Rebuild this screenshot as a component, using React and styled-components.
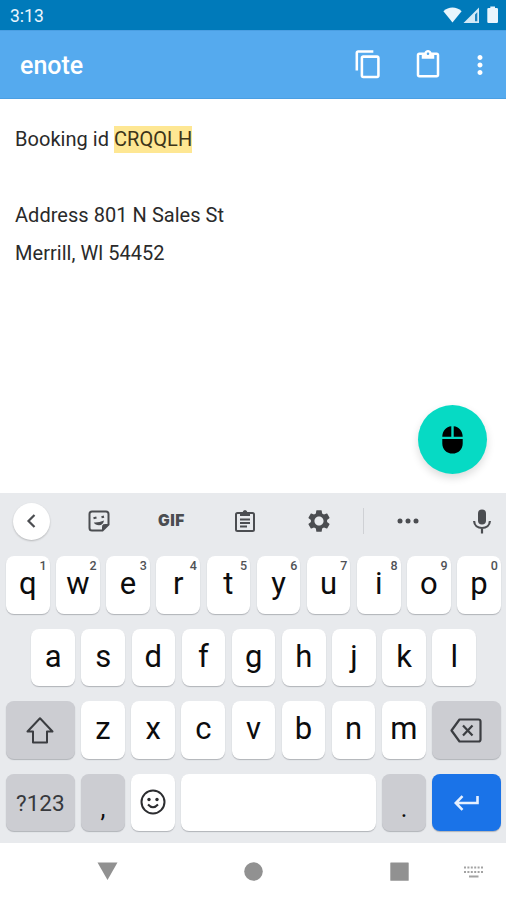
import React from 'react';
import styled, {createGlobalStyle} from 'styled-components';

const GlobalStyle = createGlobalStyle`
  * {
    box-sizing: border-box;
  }

  body {
    margin: 0;
    background-color: #fff;
    font-family: Roboto, 'Liberation Sans', sans-serif;
  }

  svg {
    display: block;
    flex-shrink: 0;
  }
`;

const Screen = styled.div`
  display: flex;
  flex-direction: column;
  width: 506px;
  height: 900px;
  overflow: hidden;
`;

const StatusBar = styled.div`
  display: flex;
  align-items: center;
  height: 30px;
  padding: 0 7px 0 10px;
  background-color: #007aba;
  color: #e9f5fd;
`;

const Clock = styled.span`
  flex: 1;
  padding-top: 2px;
  font-size: 17.5px;
  line-height: 28px;
`;

const AppBar = styled.header`
  display: flex;
  align-items: center;
  height: 69px;
  padding: 0 11px 0 20px;
  background-color: #55aaee;
  border-top: 1px solid #4b9fe2;
  border-bottom: 1px solid #4a9fe3;
  color: #fff;
`;

const Title = styled.h1`
  flex: 1;
  margin: 2px 0 0;
  font-size: 25px;
  font-weight: 500;
  letter-spacing: 0;
`;

const BarButton = styled.button`
  display: flex;
  margin: 0 0 0 ${(props) => props.$gap}px;
  padding: 0;
  border: 0;
  background: none;
  color: inherit;
`;

const Note = styled.main`
  position: relative;
  height: 394px;
  padding: 21px 15px 0;
  background-color: #fff;
`;

const Line = styled.p`
  height: 38px;
  margin: 0;
  color: #2a2a2a;
  font-size: 20px;
  line-height: 38px;
  letter-spacing: 0.04px;
  white-space: nowrap;
`;

const Mark = styled.mark`
  padding: 1px 0 2px;
  background-color: #fee793;
  color: #3c3419;
`;

const Fab = styled.button`
  position: absolute;
  right: 19px;
  bottom: 19px;
  display: flex;
  align-items: center;
  justify-content: center;
  width: 69px;
  height: 69px;
  padding: 0;
  border: 0;
  border-radius: 50%;
  background-color: #06dac4;
  color: #000;
  box-shadow: 0 4px 9px rgba(0, 0, 0, 0.14);
`;

const Keyboard = styled.section`
  height: 350px;
  background-color: #e8eaed;
`;

const Tools = styled.div`
  display: grid;
  grid-template-columns: 62px 73px 73px 74px 73px 16px 74px 1fr;
  align-items: center;
  justify-items: center;
  height: 63px;
  padding-bottom: 7px;
  color: #4b4d51;
`;

const Back = styled.div`
  display: flex;
  align-items: center;
  justify-content: center;
  width: 37px;
  height: 37px;
  border-radius: 50%;
  background-color: #fff;
  box-shadow: 0 1px 2px rgba(0, 0, 0, 0.22);
`;

const Tool = styled.div`
  display: flex;
`;

const MicTool = styled(Tool)`
  justify-self: end;
  margin-right: 15px;
`;

const Gif = styled.span`
  font-family: Inter, Roboto, sans-serif;
  font-size: 15.5px;
  font-weight: 900;
  line-height: 20px;
  letter-spacing: 0.6px;
`;

const Divider = styled.div`
  width: 1px;
  height: 26px;
  background-color: #cfd1d5;
`;

const Rows = styled.div`
  display: grid;
  grid-auto-rows: 57.5px;
  row-gap: 15px;
`;

const Row = styled.div`
  display: flex;
  gap: 6.6px;
  padding: 0 ${(props) => (props.$inset ? 30 : 5)}px 0 ${(props) => (props.$inset ? 31.3 : 6)}px;
`;

const keyColors = {
  plain: '#fff',
  muted: '#cccdd2',
  accent: '#1a73e8',
};

const Key = styled.div`
  position: relative;
  display: flex;
  align-items: center;
  justify-content: center;
  flex: ${(props) => (props.$wide ? '0 0 68.6px' : props.$space ? '1 1 0' : '0 0 43.56px')};
  height: 57.5px;
  padding-bottom: ${(props) => props.$lift || 0}px;
  border-radius: 8px;
  background-color: ${(props) => keyColors[props.$tone || 'plain']};
  color: ${(props) => (props.$tone === 'accent' ? '#e6f0ff' : '#0c0c0d')};
  font-size: 31px;
  line-height: 1;
  box-shadow: 0 1px 1px rgba(60, 64, 70, 0.32);
`;

const Hint = styled.span`
  position: absolute;
  top: 3px;
  right: 3px;
  color: #505256;
  font-size: 12.5px;
  font-weight: 500;
  line-height: 13px;
`;

const Switcher = styled.span`
  padding-top: 2px;
  color: #37393d;
  font-size: 22.5px;
`;

const Punctuation = styled.span`
  padding-top: 13px;
  font-size: 25px;
`;

const NavBar = styled.nav`
  display: grid;
  grid-template-columns: 146px 147px 145px;
  align-items: center;
  justify-items: center;
  height: 57px;
  padding-left: 34px;
  background-color: #fff;
  color: #919191;
  grid-auto-flow: column;
`;

const NavItem = styled.div`
  display: flex;
`;

const KeyboardToggle = styled(NavItem)`
  justify-self: start;
  margin-left: -9px;
  color: #a3a3a3;
`;

function Icon({size = 24, children}) {
  return (
    <svg width={size} height={size} viewBox="0 0 24 24" fill="currentColor">
      {children}
    </svg>
  );
}

function StatusIcons() {
  return (
    <svg width="56" height="20" viewBox="443 5 56 20" fill="currentColor">
      <path d="M443.4 11.2C448.5 6.2 456.5 6.2 461.6 11.2L452.5 22.5Z" />
      <path d="M463.5 23L479 7.5V23Z" opacity=".9" />
      <path d="M475 14.5V21.2H477.3V12.2Z" fill="#1c83c0" />
      <path d="M488.5 8H490.3V6.5H495V8H496.8Q498 8 498 9.2V21.8Q498 23 496.8 23H488.5Q487.3 23 487.3 21.8V9.2Q487.3 8 488.5 8Z" />
    </svg>
  );
}

const topRow = 'qwertyuiop'.split('');
const middleRow = 'asdfghjkl'.split('');
const bottomRow = 'zxcvbnm'.split('');

export default function App() {
  return (
    <Screen>
      <GlobalStyle />
      <StatusBar>
        <Clock>3:13</Clock>
        <StatusIcons />
      </StatusBar>
      <AppBar>
        <Title>enote</Title>
        <BarButton $gap={0} aria-label="Copy">
          <Icon size={30.5}>
            <path d="M16 1H4c-1.1 0-2 .9-2 2v14h2V3h12V1zm3 4H8c-1.1 0-2 .9-2 2v14c0 1.1.9 2 2 2h11c1.1 0 2-.9 2-2V7c0-1.1-.9-2-2-2zm0 16H8V7h11v14z" />
          </Icon>
        </BarButton>
        <BarButton $gap={30} aria-label="Paste">
          <Icon size={30}>
            <path d="M19 2h-4.18C14.4.84 13.3 0 12 0c-1.3 0-2.4.84-2.82 2H5c-1.1 0-2 .9-2 2v16c0 1.1.9 2 2 2h14c1.1 0 2-.9 2-2V4c0-1.1-.9-2-2-2zm-7 0c.55 0 1 .45 1 1s-.45 1-1 1-1-.45-1-1 .45-1 1-1zm7 18H5V4h2v3h10V4h2v16z" />
          </Icon>
        </BarButton>
        <BarButton $gap={22} aria-label="More">
          <Icon size={30}>
            <path d="M12 8c1.1 0 2-.9 2-2s-.9-2-2-2-2 .9-2 2 .9 2 2 2zm0 2c-1.1 0-2 .9-2 2s.9 2 2 2 2-.9 2-2-.9-2-2-2zm0 6c-1.1 0-2 .9-2 2s.9 2 2 2 2-.9 2-2-.9-2-2-2z" />
          </Icon>
        </BarButton>
      </AppBar>
      <Note>
        <Line>Booking id <Mark>CRQQLH</Mark></Line>
        <Line />
        <Line>Address 801 N Sales St</Line>
        <Line>Merrill, Wl 54452</Line>
        <Fab aria-label="Mouse">
          <svg width="21" height="28" viewBox="0 0 21 28" fill="currentColor">
            <path d="M9.3 .3V10.8H.3C.3 5 4.200 .8 9.300 .3zM11.700 .3V10.800H20.700C20.700 5 16.800 .8 11.700 .3zM.3 13.100H20.700V17.500C20.700 23.200 16.300 27.600 10.500 27.600S.3 23.200 .3 17.500z" />
          </svg>
        </Fab>
      </Note>
      <Keyboard>
        <Tools>
          <Back>
            <svg width="12" height="16" viewBox="0 0 12 16" fill="none" stroke="#4b4d51" strokeWidth="2.2">
              <path d="M9.5 2L3.5 8L9.5 14" />
            </svg>
          </Back>
          <Tool>
            <svg width="22" height="22" viewBox="0 0 22 22" fill="none" stroke="currentColor" strokeWidth="2">
              <path d="M4 1.5H18Q20.5 1.5 20.5 4V14.5L14.5 20.5H4Q1.5 20.5 1.5 18V4Q1.5 1.5 4 1.5Z" />
              <path d="M14.5 20V16.5Q14.5 14.5 16.5 14.5H20Z" fill="currentColor" strokeWidth="1" />
              <path d="M5.5 8.2L8.5 7.5M13.5 7.3L16 6.6" strokeWidth="2.2" />
              <path d="M5.8 12.5Q11 12.8 16 10.5Q15.2 15 11 15.3Q7.3 15.3 5.8 12.5Z" fill="currentColor" stroke="none" />
            </svg>
          </Tool>
          <Gif>GIF</Gif>
          <Tool>
            <svg width="22" height="24" viewBox="0 0 22 24" fill="none" stroke="currentColor" strokeWidth="2">
              <rect x="2" y="4" width="18" height="18" rx="1.5" />
              <path d="M6 3.5H8.5Q9 1 11 1T13.5 3.5H16V7H6Z" fill="currentColor" stroke="none" />
              <path d="M6 10.5H16M6 14H16M6 17.5H13" strokeWidth="1.9" />
            </svg>
          </Tool>
          <Tool>
            <Icon size={26}>
              <path
                fillRule="evenodd"
                d="M19.43 12.98c.04-.32.07-.64.07-.98s-.03-.66-.07-.98l2.11-1.65c.19-.15.24-.42.12-.64l-2-3.46c-.12-.22-.39-.3-.61-.22l-2.49 1c-.52-.4-1.08-.73-1.69-.98l-.38-2.65C14.46 2.18 14.25 2 14 2h-4c-.25 0-.46.18-.49.42l-.38 2.65c-.61.25-1.17.59-1.69.98l-2.49-1c-.23-.09-.49 0-.61.22l-2 3.46c-.13.22-.07.49.12.64l2.11 1.65c-.04.32-.07.65-.07.98s.03.66.07.98l-2.11 1.65c-.19.15-.24.42-.12.64l2 3.46c.12.22.39.3.61.22l2.49-1c.52.4 1.08.73 1.69.98l.38 2.65c.03.24.24.42.49.42h4c.25 0 .46-.18.49-.42l.38-2.65c.61-.25 1.17-.59 1.69-.98l2.49 1c.23.09.49 0 .61-.22l2-3.46c.12-.22.07-.49-.12-.64l-2.11-1.65zM12 16.2c-2.3 0-4.2-1.9-4.2-4.2s1.9-4.2 4.2-4.2 4.2 1.9 4.2 4.2-1.9 4.2-4.2 4.2z"
              />
            </Icon>
          </Tool>
          <Divider />
          <Tool>
            <svg width="22" height="6" viewBox="0 0 22 6" fill="currentColor">
              <circle cx="3" cy="3" r="2.5" />
              <circle cx="11" cy="3" r="2.5" />
              <circle cx="19" cy="3" r="2.5" />
            </svg>
          </Tool>
          <MicTool>
            <svg width="18" height="25" viewBox="0 0 18 25" fill="none" stroke="currentColor" strokeWidth="2.200">
              <rect x="5" y=".5" width="8" height="15" rx="4" fill="currentColor" stroke="none" />
              <path d="M1.100 12C1.300 16.500 4.700 19 9 19S16.700 16.500 16.900 12M9 19V24.500" />
            </svg>
          </MicTool>
        </Tools>
        <Rows>
          <Row>
            {topRow.map((letter, index) => (
              <Key key={letter} $lift={2}>
                {letter}
                <Hint>{(index + 1) % 10}</Hint>
              </Key>
            ))}
          </Row>
          <Row $inset>
            {middleRow.map((letter) => <Key key={letter} $lift={2}>{letter}</Key>)}
          </Row>
          <Row>
            <Key $wide $tone="muted">
              <svg width="28" height="28" viewBox="0 0 28 28" fill="none" stroke="#3b3d41" strokeWidth="2" strokeLinejoin="round">
                <path d="M14 2.300L26.500 15.500H21V26.500H7V15.500H1.500Z" />
              </svg>
            </Key>
            {bottomRow.map((letter) => <Key key={letter} $lift={2}>{letter}</Key>)}
            <Key $wide $tone="muted">
              <svg width="32" height="26" viewBox="0 0 32 26" fill="none" stroke="#3b3d41" strokeWidth="2.200">
                <path d="M9.500 2.500H28.500Q30.500 2.500 30.500 4.500V22.500Q30.500 24.500 28.500 24.500H9.500L1.500 13.500Z" strokeLinejoin="round" />
                <path d="M13 8.500L22.500 18.500M22.500 8.500L13 18.500" />
              </svg>
            </Key>
          </Row>
          <Row>
            <Key $wide $tone="muted"><Switcher>?123</Switcher></Key>
            <Key $tone="muted"><Punctuation>,</Punctuation></Key>
            <Key>
              <svg width="26" height="26" viewBox="0 0 26 26" fill="none" stroke="#2c2d30" strokeWidth="2">
                <circle cx="13" cy="13" r="11.500" />
                <circle cx="9" cy="10.500" r="1.700" fill="#2c2d30" stroke="none" />
                <circle cx="17" cy="10.500" r="1.700" fill="#2c2d30" stroke="none" />
                <path d="M8 15.500Q13 21 18 15.500" />
              </svg>
            </Key>
            <Key $space />
            <Key $tone="muted"><Punctuation>.</Punctuation></Key>
            <Key $wide $tone="accent">
              <svg width="25" height="18" viewBox="0 0 25 18" fill="none" stroke="currentColor" strokeWidth="2.600">
                <path d="M23.500 3V10H2M8.500 3.200L1.800 10L8.500 16.800" />
              </svg>
            </Key>
          </Row>
        </Rows>
      </Keyboard>
      <NavBar>
        <NavItem>
          <svg width="21" height="19" viewBox="0 0 21 19" fill="currentColor">
            <path d="M.5 .5H20.500L10.500 18Z" />
          </svg>
        </NavItem>
        <NavItem>
          <Icon size={19}>
            <circle cx="12" cy="12" r="11.700" />
          </Icon>
        </NavItem>
        <NavItem>
          <svg width="19" height="19" viewBox="0 0 19 19" fill="currentColor">
            <rect x=".3" y=".5" width="18.400" height="18.200" rx=".5" />
          </svg>
        </NavItem>
        <KeyboardToggle>
          <svg width="21" height="12" viewBox="0 0 21 12" fill="none" stroke="currentColor" strokeWidth="2">
            <path d="M1 1.500H20M1 6H20" strokeDasharray="2 1.400" />
            <path d="M6 10.500H15.500" />
          </svg>
        </KeyboardToggle>
      </NavBar>
    </Screen>
  );
}
